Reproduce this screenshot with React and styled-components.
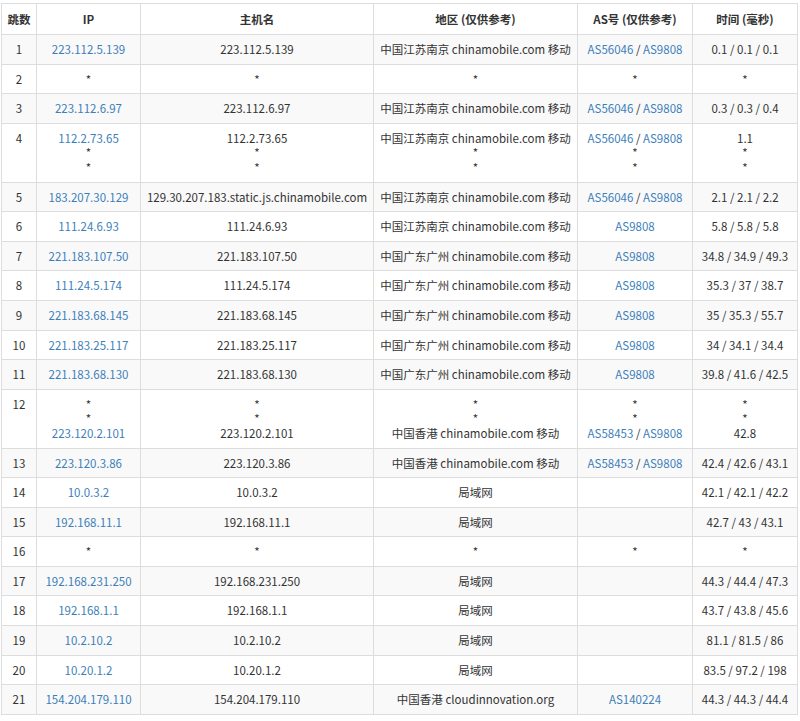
import React from "react";
import styled, { createGlobalStyle } from "styled-components";

const G = createGlobalStyle`
  body { margin: 0; background: #fff; font-family: "Noto Sans CJK SC", "Open Sans", sans-serif; color: #333; }
`;
const Wrap = styled.div` padding: 3px 3px 0 1px; `;
const Table = styled.table`
  border-collapse: collapse; width: 796px; table-layout: fixed; font-size: 11.5px;
`;
const Th = styled.th`
  border: 1px solid #ddd; font-weight: bold; height: 30px; padding: 0 4px; line-height: 15px; white-space: nowrap;
`;
const Tr = styled.tr` background: ${p => (p.$odd ? "#f9f9f9" : "#fff")}; `;
const Td = styled.td`
  border: 1px solid #ddd; text-align: center; vertical-align: top; padding: 7px 2px; line-height: 14.6px; white-space: nowrap; overflow: hidden;
`;
const A = styled.span` color: #3d7fb9; `;

const rows = [
  ["1", ["223.112.5.139"], ["223.112.5.139"], ["中国江苏南京 chinamobile.com 移动"], [["AS56046","AS9808"]], ["0.1 / 0.1 / 0.1"]],
  ["2", ["*"], ["*"], ["*"], ["*"], ["*"]],
  ["3", ["223.112.6.97"], ["223.112.6.97"], ["中国江苏南京 chinamobile.com 移动"], [["AS56046","AS9808"]], ["0.3 / 0.3 / 0.4"]],
  ["4", ["112.2.73.65","*","*"], ["112.2.73.65","*","*"], ["中国江苏南京 chinamobile.com 移动","*","*"], [["AS56046","AS9808"],"*","*"], ["1.1","*","*"]],
  ["5", ["183.207.30.129"], ["129.30.207.183.static.js.chinamobile.com"], ["中国江苏南京 chinamobile.com 移动"], [["AS56046","AS9808"]], ["2.1 / 2.1 / 2.2"]],
  ["6", ["111.24.6.93"], ["111.24.6.93"], ["中国江苏南京 chinamobile.com 移动"], [["AS9808"]], ["5.8 / 5.8 / 5.8"]],
  ["7", ["221.183.107.50"], ["221.183.107.50"], ["中国广东广州 chinamobile.com 移动"], [["AS9808"]], ["34.8 / 34.9 / 49.3"]],
  ["8", ["111.24.5.174"], ["111.24.5.174"], ["中国广东广州 chinamobile.com 移动"], [["AS9808"]], ["35.3 / 37 / 38.7"]],
  ["9", ["221.183.68.145"], ["221.183.68.145"], ["中国广东广州 chinamobile.com 移动"], [["AS9808"]], ["35 / 35.3 / 55.7"]],
  ["10", ["221.183.25.117"], ["221.183.25.117"], ["中国广东广州 chinamobile.com 移动"], [["AS9808"]], ["34 / 34.1 / 34.4"]],
  ["11", ["221.183.68.130"], ["221.183.68.130"], ["中国广东广州 chinamobile.com 移动"], [["AS9808"]], ["39.8 / 41.6 / 42.5"]],
  ["12", ["*","*","223.120.2.101"], ["*","*","223.120.2.101"], ["*","*","中国香港 chinamobile.com 移动"], ["*","*",["AS58453","AS9808"]], ["*","*","42.8"]],
  ["13", ["223.120.3.86"], ["223.120.3.86"], ["中国香港 chinamobile.com 移动"], [["AS58453","AS9808"]], ["42.4 / 42.6 / 43.1"]],
  ["14", ["10.0.3.2"], ["10.0.3.2"], ["局域网"], [""], ["42.1 / 42.1 / 42.2"]],
  ["15", ["192.168.11.1"], ["192.168.11.1"], ["局域网"], [""], ["42.7 / 43 / 43.1"]],
  ["16", ["*"], ["*"], ["*"], ["*"], ["*"]],
  ["17", ["192.168.231.250"], ["192.168.231.250"], ["局域网"], [""], ["44.3 / 44.4 / 47.3"]],
  ["18", ["192.168.1.1"], ["192.168.1.1"], ["局域网"], [""], ["43.7 / 43.8 / 45.6"]],
  ["19", ["10.2.10.2"], ["10.2.10.2"], ["局域网"], [""], ["81.1 / 81.5 / 86"]],
  ["20", ["10.20.1.2"], ["10.20.1.2"], ["局域网"], [""], ["83.5 / 97.2 / 198"]],
  ["21", ["154.204.179.110"], ["154.204.179.110"], ["中国香港 cloudinnovation.org"], [["AS140224"]], ["44.3 / 44.3 / 44.4"]],
];

const Lines = ({ items, link }) =>
  items.map((it, i) => (
    <div key={i}>
      {Array.isArray(it)
        ? it.map((a, j) => (
            <React.Fragment key={j}>
              {j > 0 && " / "}
              <A>{a}</A>
            </React.Fragment>
          ))
        : link && it !== "*" ? <A>{it}</A> : it || "\u00a0"}
    </div>
  ));

export default function App() {
  return (
    <Wrap>
      <G />
      <Table>
        <colgroup>
          <col style={{ width: 35 }} /><col style={{ width: 104 }} /><col style={{ width: 233 }} />
          <col style={{ width: 204 }} /><col style={{ width: 115 }} /><col style={{ width: 105 }} />
        </colgroup>
        <thead>
          <tr><Th>跳数</Th><Th>IP</Th><Th>主机名</Th><Th>地区 (仅供参考)</Th><Th>AS号 (仅供参考)</Th><Th>时间 (毫秒)</Th></tr>
        </thead>
        <tbody>
          {rows.map((r, i) => (
            <Tr key={i} $odd={i % 2 === 0}>
              <Td>{r[0]}</Td>
              <Td><Lines items={r[1]} link /></Td>
              <Td><Lines items={r[2]} /></Td>
              <Td><Lines items={r[3]} /></Td>
              <Td><Lines items={r[4]} /></Td>
              <Td><Lines items={r[5]} /></Td>
            </Tr>
          ))}
        </tbody>
      </Table>
    </Wrap>
  );
}
